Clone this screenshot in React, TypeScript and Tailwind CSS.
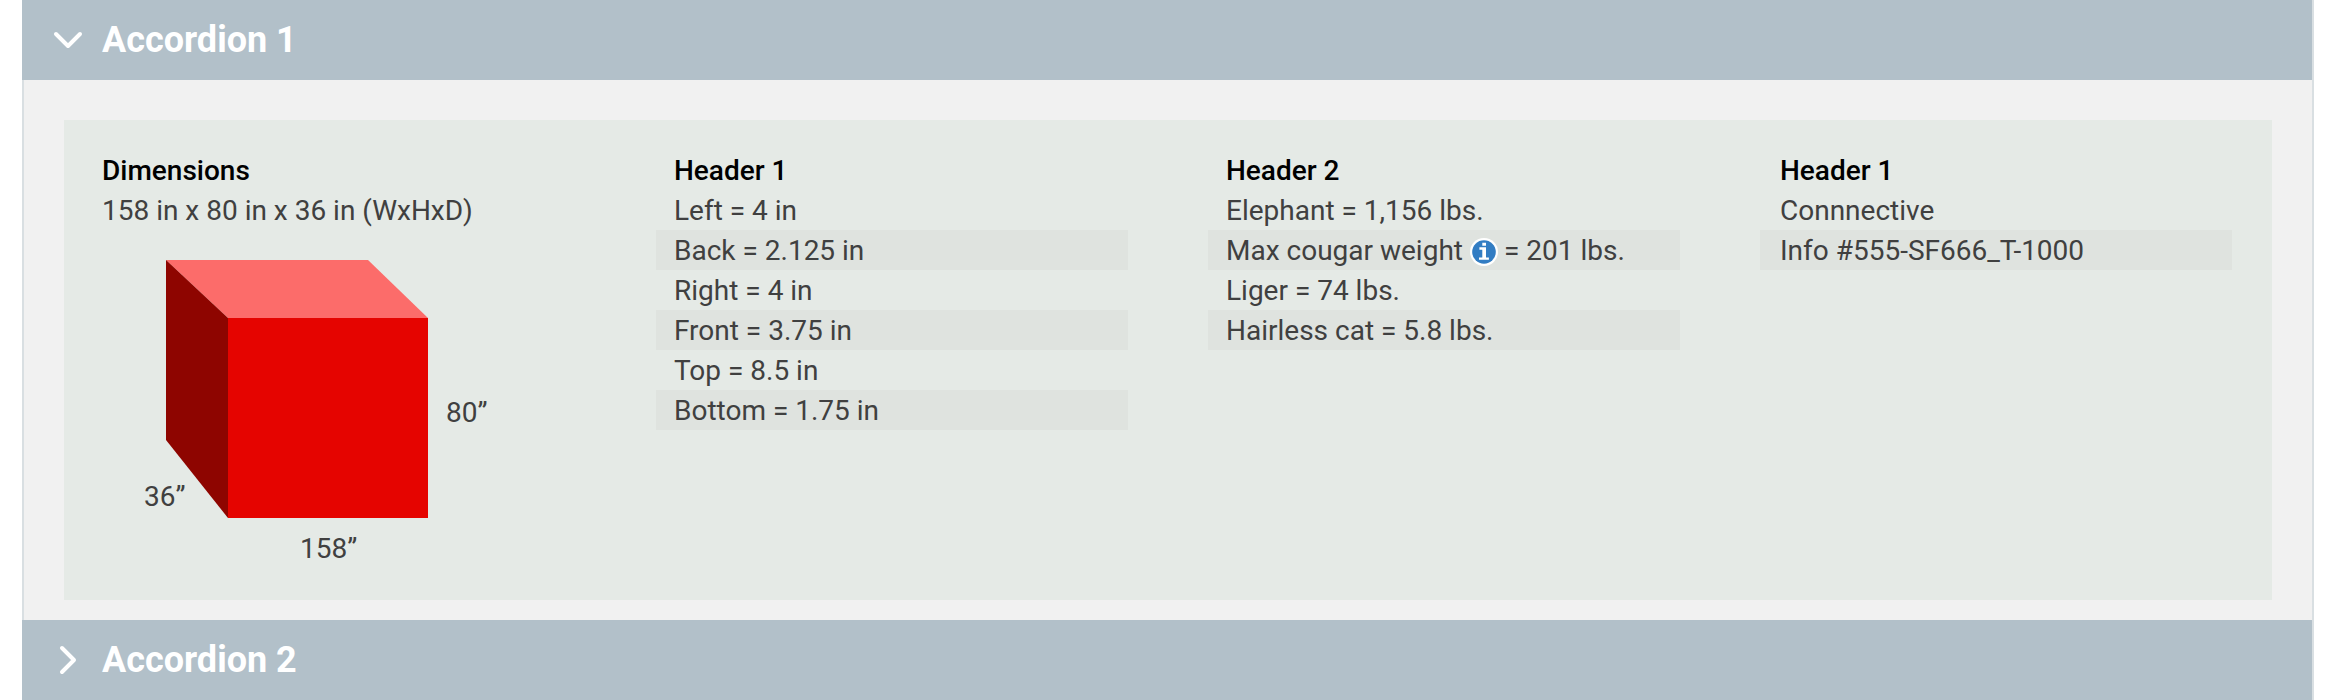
import type { ReactNode } from 'react';

function Chevron({ open }: { open?: boolean }) {
  return (
    <svg viewBox="0 0 32 32" className="h-8 w-8 shrink-0" fill="none" stroke="#fff" strokeWidth="4" strokeLinecap="round" strokeLinejoin="round">
      {open ? <path d="M4 10 L16 22 L28 10" /> : <path d="M10 4 L22 16 L10 28" />}
    </svg>
  );
}

function AccordionHeader({ title, open }: { title: string; open?: boolean }) {
  return (
    <button className="flex h-20 w-full items-center gap-[18px] bg-[#b2c0c9] pl-[30px] text-left text-[36px] leading-[80px] font-bold text-white">
      <Chevron open={open} />
      <span>{title}</span>
    </button>
  );
}

function InfoIcon() {
  return (
    <svg viewBox="0 0 28 28" className="mt-2 mr-1.5 ml-[7px] h-7 w-7 shrink-0">
      <circle cx="14" cy="14" r="14" fill="#fff" />
      <circle cx="14" cy="14" r="11.8" fill="#327dc3" />
      <path d="M12.3 4.8h3.7v3h-3.7zM9.4 9.3h6.6v10.2h2.9v2.3H9v-2.3h3.3v-7.7H9.4z" fill="#fff" />
    </svg>
  );
}

function SpecColumn({ title, rows, inset = 'px-[18px]' }: { title: string; rows: ReactNode[]; inset?: string }) {
  return (
    <section className="px-10">
      <h3 className={`h-10 font-medium text-black ${inset}`}>{title}</h3>
      <ul>
        {rows.map((row, i) => (
          <li key={i} className={`flex h-10 items-start whitespace-pre even:bg-[#dfe3df] ${inset}`}>
            {row}
          </li>
        ))}
      </ul>
    </section>
  );
}

function Cube() {
  return (
    <svg viewBox="0 0 400 350" className="block h-[350px] w-[400px] text-[28px]" fill="#404040">
      <polygon points="64,30 266,30 326,88 126,88" fill="#fc6c6a" />
      <polygon points="64,30 126,88 126,288 64,210" fill="#8e0500" />
      <rect x="126" y="88" width="200" height="200" fill="#e50400" />
      <text x="344" y="192">80”</text>
      <text x="42" y="276">36”</text>
      <text x="198" y="328">158”</text>
    </svg>
  );
}

export default function App() {
  return (
    <div className="h-[700px] overflow-hidden bg-white pr-5 pl-[22px] font-['Roboto',sans-serif] text-[28px] leading-[42px] text-[#404040]">
      <div className="border-r-2 border-[#d9dfe2]">
        <AccordionHeader title="Accordion 1" open />
        <div className="h-[540px] border-l-2 border-[#d9dfe2] bg-[#f1f1f1] px-10 pt-10">
          <div className="grid h-[480px] grid-cols-4 bg-[#e5eae6] pt-[30px]">
            <section className="pl-[38px]">
              <h3 className="h-10 font-medium text-black">Dimensions</h3>
              <p className="h-10">158 in x 80 in x 36 in (WxHxD)</p>
              <Cube />
            </section>
            <SpecColumn
              title="Header 1"
              rows={['Left = 4 in', 'Back = 2.125 in', 'Right = 4 in', 'Front = 3.75 in', 'Top = 8.5 in', 'Bottom = 1.75 in']}
            />
            <SpecColumn
              title="Header 2"
              rows={[
                'Elephant = 1,156 lbs.',
                <>
                  <span>Max cougar weight</span>
                  <InfoIcon />
                  <span>= 201 lbs.</span>
                </>,
                'Liger = 74 lbs.',
                'Hairless cat = 5.8 lbs.',
              ]}
            />
            <SpecColumn title="Header 1" rows={['Connnective', 'Info #555-SF666_T-1000']} inset="px-5" />
          </div>
        </div>
        <AccordionHeader title="Accordion 2" />
      </div>
    </div>
  );
}
